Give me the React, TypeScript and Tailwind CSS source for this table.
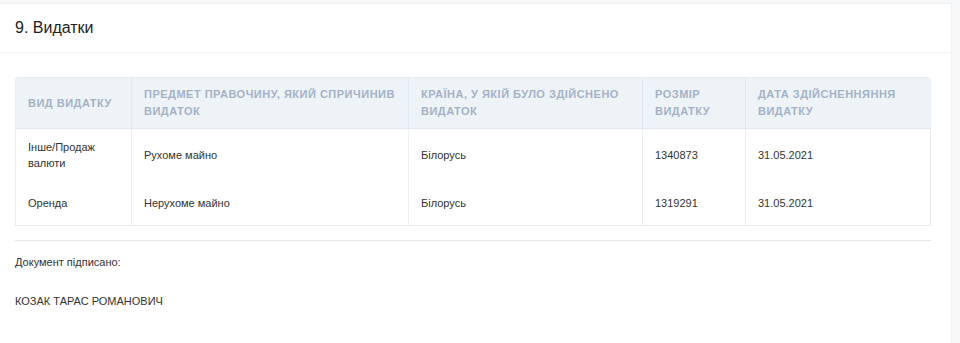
import React from "react";

type Row = { kind: string; subject: string; country: string; amount: string; date: string };

const rows: Row[] = [
  { kind: "Інше/Продаж валюти", subject: "Рухоме майно", country: "Білорусь", amount: "1340873", date: "31.05.2021" },
  { kind: "Оренда", subject: "Нерухоме майно", country: "Білорусь", amount: "1319291", date: "31.05.2021" },
];

const heads = [
  "Вид видатку",
  "Предмет правочину, який спричинив видаток",
  "Країна, у якій було здійснено видаток",
  "Розмір видатку",
  "Дата здійсненняння видатку",
];

const cols = "grid grid-cols-[115px_277px_234px_103px_185px]";

export default function App() {
  return (
    <div
      className="min-h-[343px] bg-[#f7f8fa] pt-[3px] pr-[8px]"
      style={{ fontFamily: '"Liberation Sans", Arial, sans-serif' }}
    >
      <div className="min-h-[340px] border-t border-r border-[#eff1f3] bg-white">
        <div className="flex h-[49px] items-center border-b border-[#eef0f2] px-[15px] text-[16px] text-[#222]">
          9. Видатки
        </div>
        <div className="px-[15px] pt-[24px]">
          <div className="w-[916px] overflow-hidden rounded-t-[3px] border border-[#e9edf1]">
            <div className={`${cols} bg-[#eef3f8] border-b border-[#dfe6ee]`}>
              {heads.map((h, i) => (
                <div
                  key={h}
                  className={`flex items-center py-[8px] pl-[12px] pr-[4px] text-[11px] font-bold uppercase leading-[17px] tracking-[0.5px] text-[#a3b2c7] ${
                    i > 0 ? "border-l border-[#e1e7ee]" : ""
                  }`}
                >
                  {h}
                </div>
              ))}
            </div>
            {rows.map((r, ri) => (
              <div key={ri} className={cols}>
                {[r.kind, r.subject, r.country, r.amount, r.date].map((c, i) => (
                  <div
                    key={i}
                    className={`flex items-center px-[12px] pt-[10px] pb-[14px] text-[11px] leading-[16px] text-[#333] ${
                      i > 0 ? "border-l border-[#eceff2]" : ""
                    } ${i === 0 ? "pr-[20px]" : ""}`}
                  >
                    {c}
                  </div>
                ))}
              </div>
            ))}
          </div>
          <div className="mt-[14px] w-[916px] border-t border-[#e4e6e8]" />
          <div className="mt-[13px] text-[11px] leading-[16px] text-[#333]">Документ підписано:</div>
          <div className="mt-[23px] text-[11px] leading-[16px] text-[#333]">КОЗАК ТАРАС РОМАНОВИЧ</div>
        </div>
      </div>
    </div>
  );
}
